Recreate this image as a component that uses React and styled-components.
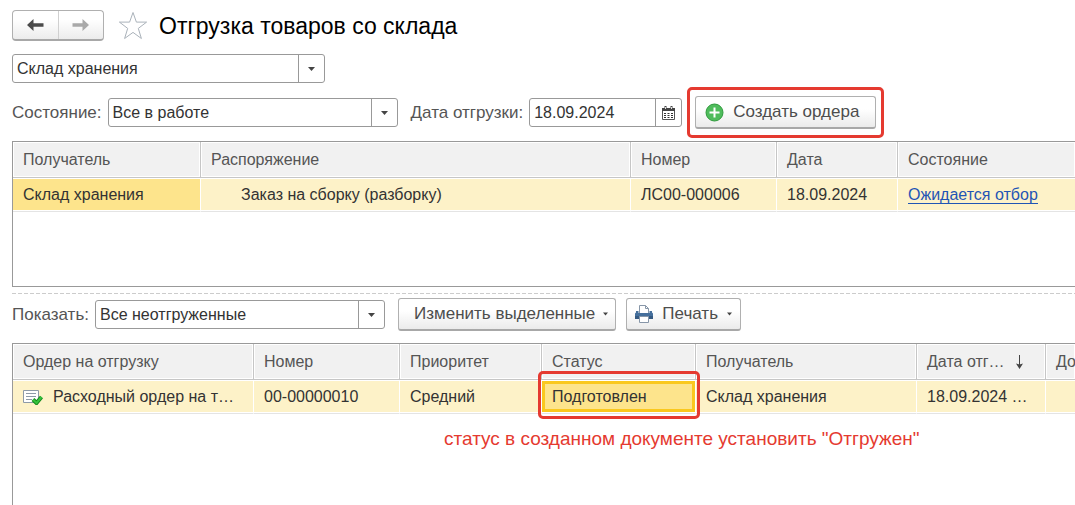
import React from 'react';
import styled, { createGlobalStyle } from 'styled-components';

const GlobalStyle = createGlobalStyle`
  *, *::before, *::after {
    box-sizing: border-box;
  }
  html, body, #root {
    height: 100%;
  }
  body {
    margin: 0;
    background: #fff;
    color: #333;
    font-family: "Liberation Sans", Arial, sans-serif;
    font-size: 16px;
    line-height: 20px;
    overflow: hidden;
  }
  button, input, select {
    font: inherit;
    color: inherit;
  }
`;

const Page = styled.main`
  display: flex;
  flex-direction: column;
  min-height: 100%;
  padding: 10px 0 0 12px;
`;

const Header = styled.header`
  display: flex;
  align-items: center;
  margin-bottom: 13px;
`;

const NavGroup = styled.div`
  display: flex;
  width: 92px;
  height: 31px;
  border: 1px solid #b0b0b0;
  border-bottom: 2px solid #a8a8a8;
  border-radius: 4px;
  background: linear-gradient(#fff 30%, #ececec);
`;

const NavButton = styled.button`
  display: flex;
  flex: 1;
  align-items: center;
  justify-content: center;
  padding: 0;
  border: 0;
  background: none;
  color: #4a4a4a;
  & + & {
    border-left: 1px solid #d0d0d0;
  }
  &:disabled {
    color: #a9a9a9;
  }
`;

const StarButton = styled.button`
  display: flex;
  margin: 0 11px 0 14px;
  padding: 0;
  border: 0;
  background: none;
`;

const Title = styled.h1`
  margin: 0;
  color: #000;
  font-size: 23px;
  font-weight: 400;
  line-height: 30px;
`;

const Toolbar = styled.div`
  display: flex;
  align-items: center;
  gap: 13px;
  margin-bottom: 12px;
`;

const WarehouseBar = styled(Toolbar)`
  margin-bottom: 13px;
`;

const FieldGroup = styled.div`
  display: flex;
  align-items: center;
  gap: 6px;
`;

const ButtonGroup = styled.div`
  display: flex;
  gap: 10px;
`;

const Label = styled.label`
  color: #555;
  font-size: 17px;
  white-space: nowrap;
`;

const Field = styled.div`
  display: grid;
  grid-template-columns: 1fr 26px;
  width: ${({ $width }) => $width}px;
  height: 29px;
  border: 1px solid #999;
  border-radius: 3px;
  background: #fff;
`;

const Select = styled.select`
  grid-area: 1 / 1 / 2 / 3;
  min-width: 0;
  padding: 0 30px 0 4px;
  border: 0;
  background: none;
  appearance: none;
`;

const Arrow = styled.span`
  grid-area: 1 / 2;
  display: flex;
  align-items: center;
  justify-content: center;
  border-left: 1px solid #999;
  pointer-events: none;
`;

const DateInput = styled.input`
  min-width: 0;
  padding: 0 4px;
  border: 0;
  background: none;
`;

const CalendarButton = styled.button`
  display: flex;
  align-items: center;
  justify-content: center;
  padding: 0;
  border: 0;
  border-left: 1px solid #999;
  background: none;
`;

const Button = styled.button`
  display: flex;
  align-items: center;
  gap: ${({ $gap }) => $gap || 9}px;
  height: 33px;
  padding: ${({ $padding }) => $padding || '0 8px'};
  border: 1px solid #b0b0b0;
  border-bottom: 2px solid #a8a8a8;
  border-radius: 3px;
  background: linear-gradient(#fff 40%, #ebebeb);
  color: #4d4d4d;
  font-size: 17px;
  white-space: nowrap;
`;

const Highlight = styled.div`
  position: relative;
`;

const Frame = styled.span`
  position: absolute;
  inset: ${({ $inset }) => $inset};
  z-index: 1;
  border: 3px solid #e53a30;
  border-radius: 5px;
  pointer-events: none;
`;

const Panel = styled.section`
  border: 1px solid #999;
  border-right: 0;
  overflow: hidden;
`;

const ReceiversPanel = styled(Panel)`
  height: 146px;
`;

const OrdersPanel = styled(Panel)`
  flex: 1;
  border-bottom: 0;
`;

const Splitter = styled.div`
  margin: 6px 0 4px;
  height: 1px;
  background: repeating-linear-gradient(90deg, #ccc 0 4px, transparent 4px 6px);
`;

const Table = styled.table`
  width: 100%;
  border-collapse: separate;
  border-spacing: 0;
  table-layout: fixed;
`;

const Th = styled.th`
  width: ${({ $width }) => ($width ? `${$width}px` : 'auto')};
  height: 36px;
  padding: 0 10px;
  border-right: 1px solid #c6c6c6;
  border-bottom: 1px solid #c6c6c6;
  background: #f1f1f1;
  box-shadow: inset 0 0 0 1px #fff;
  color: #555;
  font-weight: 400;
  text-align: left;
  white-space: nowrap;
  &:last-child {
    padding-right: 0;
    border-right: 0;
  }
`;

const Td = styled.td`
  position: relative;
  height: 34px;
  padding: 0 10px;
  border-right: 1px solid #fff;
  border-bottom: 1px solid #e4e4e4;
  background: ${({ $current }) => ($current ? '#fde48c' : '#fdf2c8')};
  box-shadow: inset 0 1px #fff, inset 0 -1px #fff;
  white-space: nowrap;
  &:last-child {
    border-right: 0;
  }
`;

const CellContent = styled.div`
  display: flex;
  align-items: center;
  gap: 10px;
  padding-left: ${({ $indent }) => $indent || 0}px;
`;

const ActiveCell = styled.span`
  position: absolute;
  inset: 1px 0 1px 0;
  border: 3px solid #fac81e;
`;

const StateLink = styled.a`
  border-bottom: 1px solid #1f55b5;
  color: #1f55b5;
  line-height: 16px;
  text-decoration: none;
`;

const Note = styled.p`
  margin: 14px 0 0;
  padding-left: 431px;
  color: #e53a30;
  font-size: 19px;
  line-height: 22px;
  white-space: nowrap;
`;

const ArrowIcon = ({ flip }) => (
  <svg width="18" height="12" viewBox="0 0 18 12" aria-hidden="true">
    <path
      d="M7.500 0 1 6l6.500 6V7.700h10V4.300h-10z"
      fill="currentColor"
      transform={flip ? 'rotate(180 9 6)' : undefined}
    />
  </svg>
);

const StarIcon = () => (
  <svg width="30" height="29" viewBox="0 0 30 29" aria-hidden="true">
    <path
      d="M15 1.500l3.400 9.600H28.600l-8.300 6.300 3.100 10.100L15 21.400l-8.400 6.100 3.100-10.100L1.400 11.100h10.200z"
      fill="#fff"
      stroke="#aab2ba"
    />
  </svg>
);

const CaretIcon = ({ size = 7 }) => (
  <svg width={size} height="4" viewBox="0 0 7 4" aria-hidden="true">
    <path d="M0 0h7L3.500 4z" fill="#444" />
  </svg>
);

const CalendarIcon = () => (
  <svg width="13" height="14" viewBox="0 0 13 14" aria-hidden="true">
    <path d="M.5 2.500h12v11H.5z" fill="#fff" stroke="#555" />
    <path d="M0 2h13v3H0z" fill="#444" />
    <path d="M3.500 0v4M9.500 0v4" stroke="#444" strokeWidth="2" />
    <path d="M3.500 1v2M9.500 1v2" stroke="#ddd" />
    <path
      d="M2 7h2v1H2zM5.500 7h2v1h-2zM9 7h2v1H9zM2 9h2v1H2zM5.500 9h2v1h-2zM9 9h2v1H9zM2 11h2v1H2zM5.500 11h2v1h-2zM9 11h2v1H9z"
      fill="#333"
    />
  </svg>
);

const PlusIcon = () => (
  <svg width="19" height="19" viewBox="0 0 19 19" aria-hidden="true">
    <circle cx="9.500" cy="9.500" r="8.500" fill="#4fbc5c" stroke="#2f9a3c" />
    <path d="M9.500 4.500v10M4.500 9.500h10" stroke="#fff" strokeWidth="2" />
  </svg>
);

const PrinterIcon = () => (
  <svg width="18" height="18" viewBox="0 0 18 18" aria-hidden="true">
    <path d="M4.500 9V.5h6l3 3V9" fill="#fff" stroke="#8796a8" />
    <path d="M10.500.5v3h3" fill="none" stroke="#8796a8" />
    <path d="M1 6h2.500v2h11V6H17v1.500l1 1V14H0V8.500l1-1z" fill="#456f9c" />
    <path d="M0 11h18v3H0z" fill="#355a82" />
    <path d="M4.500 11.500h9v6h-9z" fill="#fff" stroke="#8796a8" />
  </svg>
);

const DocumentIcon = () => (
  <svg width="20" height="16" viewBox="0 0 20 16" aria-hidden="true">
    <path d="M.5 1.500h15v12H.5z" fill="#fff" stroke="#8d9aa8" />
    <path d="M3 4.500h10M3 7.500h10M3 10.500h6" stroke="#8d9aa8" />
    <path d="M10 10.500l3.500 3.500 5-6" fill="none" stroke="#138a1c" strokeWidth="4" />
    <path d="M10 10.500l3.500 3.500 5-6" fill="none" stroke="#35c23e" strokeWidth="2" />
  </svg>
);

const SortIcon = () => (
  <svg width="9" height="14" viewBox="0 0 9 14" aria-hidden="true">
    <path d="M4.500 0v11" stroke="#444" />
    <path d="M1 8.500l3.500 1 3.500-1L4.500 14z" fill="#444" />
  </svg>
);

const Dropdown = ({ id, width, value, label }) => (
  <Field $width={width}>
    <Select id={id} defaultValue={value} aria-label={label}>
      <option>{value}</option>
    </Select>
    <Arrow><CaretIcon /></Arrow>
  </Field>
);

const receiverColumns = [
  { title: 'Получатель', width: 188 },
  { title: 'Распоряжение', width: 430 },
  { title: 'Номер', width: 146 },
  { title: 'Дата', width: 121 },
  { title: 'Состояние' },
];

const orderColumns = [
  { title: 'Ордер на отгрузку', width: 241 },
  { title: 'Номер', width: 146 },
  { title: 'Приоритет', width: 142 },
  { title: 'Статус', width: 154 },
  { title: 'Получатель', width: 221 },
  { title: 'Дата отг…', width: 129, sorted: true },
  { title: 'До' },
];

const TableHead = ({ columns }) => (
  <thead>
    <tr>
      {columns.map(({ title, width, sorted }) => (
        <Th key={title} $width={width} scope="col">
          <CellContent>
            {title}
            {sorted && <SortIcon />}
          </CellContent>
        </Th>
      ))}
    </tr>
  </thead>
);

const App = () => (
  <>
    <GlobalStyle />
    <Page>
      <Header>
        <NavGroup>
          <NavButton type="button" aria-label="Назад"><ArrowIcon /></NavButton>
          <NavButton type="button" aria-label="Вперед" disabled><ArrowIcon flip /></NavButton>
        </NavGroup>
        <StarButton type="button" aria-label="Избранное"><StarIcon /></StarButton>
        <Title>Отгрузка товаров со склада</Title>
      </Header>

      <WarehouseBar>
        <Dropdown width={313} value="Склад хранения" label="Склад" />
      </WarehouseBar>

      <Toolbar>
        <FieldGroup>
          <Label htmlFor="state">Состояние:</Label>
          <Dropdown id="state" width={290} value="Все в работе" />
        </FieldGroup>
        <FieldGroup>
          <Label htmlFor="date">Дата отгрузки:</Label>
          <Field $width={153}>
            <DateInput id="date" defaultValue="18.09.2024" />
            <CalendarButton type="button" aria-label="Выбрать дату"><CalendarIcon /></CalendarButton>
          </Field>
        </FieldGroup>
        <Highlight>
          <Button type="button" $padding="0 16px 0 9px">
            <PlusIcon />
            Создать ордера
          </Button>
          <Frame $inset="-9px -8px" />
        </Highlight>
      </Toolbar>

      <ReceiversPanel>
        <Table>
          <TableHead columns={receiverColumns} />
          <tbody>
            <tr>
              <Td $current>Склад хранения</Td>
              <Td><CellContent $indent={30}>Заказ на сборку (разборку)</CellContent></Td>
              <Td>ЛС00-000006</Td>
              <Td>18.09.2024</Td>
              <Td><StateLink href="#state">Ожидается отбор</StateLink></Td>
            </tr>
          </tbody>
        </Table>
      </ReceiversPanel>

      <Splitter />

      <Toolbar>
        <FieldGroup>
          <Label htmlFor="filter">Показать:</Label>
          <Dropdown id="filter" width={290} value="Все неотгруженные" />
        </FieldGroup>
        <ButtonGroup>
          <Button type="button" $gap={8} $padding="0 7px 0 15px">
            Изменить выделенные
            <CaretIcon size={5} />
          </Button>
          <Button type="button">
            <PrinterIcon />
            Печать
            <CaretIcon size={5} />
          </Button>
        </ButtonGroup>
      </Toolbar>

      <OrdersPanel>
        <Table>
          <TableHead columns={orderColumns} />
          <tbody>
            <tr>
              <Td>
                <CellContent>
                  <DocumentIcon />
                  Расходный ордер на т…
                </CellContent>
              </Td>
              <Td>00-00000010</Td>
              <Td>Средний</Td>
              <Td $current>
                Подготовлен
                <ActiveCell />
                <Frame $inset="-9px -5px -6px -4px" />
              </Td>
              <Td>Склад хранения</Td>
              <Td>18.09.2024 …</Td>
              <Td />
            </tr>
          </tbody>
        </Table>
        <Note>статус в созданном документе установить "Отгружен"</Note>
      </OrdersPanel>
    </Page>
  </>
);

export default App;
